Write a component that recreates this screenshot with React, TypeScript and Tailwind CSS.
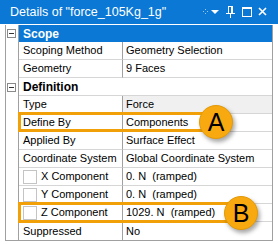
import React from "react";

type Row = {
  name: string;
  value: string;
  check?: boolean;
  grey?: boolean;
};

const scopeRows: Row[] = [
  { name: "Scoping Method", value: "Geometry Selection" },
  { name: "Geometry", value: "9 Faces" },
];

const definitionRows: Row[] = [
  { name: "Type", value: "Force", grey: true },
  { name: "Define By", value: "Components" },
  { name: "Applied By", value: "Surface Effect" },
  { name: "Coordinate System", value: "Global Coordinate System" },
  { name: "X Component", value: "0. N  (ramped)", check: true },
  { name: "Y Component", value: "0. N  (ramped)", check: true },
  { name: "Z Component", value: "1029. N  (ramped)", check: true },
  { name: "Suppressed", value: "No" },
];

function MinusBox() {
  return (
    <div className="ml-px flex h-[9px] w-[9px] items-center justify-center border border-[#8a8a8a] bg-white">
      <div className="h-px w-[5px] bg-[#333]" />
    </div>
  );
}

function PropRow({ row, last }: { row: Row; last?: boolean }) {
  return (
    <div className="flex h-[18px]">
      <div className="w-[13px] shrink-0 border-r border-[#a0a0a0]" />
      <div
        className={`flex w-[104px] shrink-0 items-center border-r border-[#a0a0a0] pl-[4px] ${
          last ? "" : "border-b border-b-[#d6d6d6]"
        }`}
      >
        {row.check ? (
          <div className="mr-[4px] h-[14px] w-[14px] shrink-0 border border-[#c4c4c4] bg-white" />
        ) : null}
        <span className="whitespace-nowrap">{row.name}</span>
      </div>
      <div
        className={`flex flex-1 items-center pl-[3px] ${
          last ? "" : "border-b border-[#d6d6d6]"
        } ${row.grey ? "bg-[#f0f0f0]" : ""}`}
      >
        <span className="whitespace-pre">{row.value}</span>
      </div>
    </div>
  );
}

function Badge({ letter }: { letter: string }) {
  return (
    <div className="flex h-[34px] w-[34px] items-center justify-center rounded-full border border-[#e39a08] bg-[#f8a90f] text-[25px] leading-none text-black shadow-[2px_3px_4px_rgba(0,0,0,0.35)]">
      {letter}
    </div>
  );
}

export default function App() {
  return (
    <div className="relative h-[244px] w-[278px] overflow-hidden bg-white font-['Liberation_Sans',Arial,sans-serif] text-[11px] text-black">
      <div className="flex h-[24px] items-center bg-[#0a78d4] pl-[10px] pr-[10px] text-white">
        <span className="flex-1 whitespace-nowrap text-[12.5px]">
          Details of "force_105Kg_1g"
        </span>
        <svg width="66" height="12" viewBox="0 0 66 12" className="shrink-0">
          <g fill="#9cc6ec">
            <rect x="1" y="5" width="1" height="1" />
            <rect x="3" y="3" width="1" height="1" />
            <rect x="3" y="7" width="1" height="1" />
            <rect x="5" y="5" width="1" height="1" />
          </g>
          <path d="M9 4 H17 L13 8 Z" fill="#fff" />
          <g fill="#fff">
            <rect x="26" y="0" width="5" height="1" />
            <rect x="26" y="0" width="1" height="7" />
            <rect x="29" y="0" width="2" height="7" />
            <rect x="24" y="7" width="9" height="1" />
            <rect x="28" y="8" width="1" height="4" />
          </g>
          <rect x="40.5" y="1.5" width="9" height="9" fill="none" stroke="#fff" strokeWidth="1" />
          <rect x="40.5" y="1.5" width="9" height="1.5" fill="#fff" />
          <path d="M57 2 L64 9 M64 2 L57 9" stroke="#fff" strokeWidth="1.6" />
        </svg>
      </div>

      <div className="ml-[5px] mt-px w-[268px] border-x border-b border-[#a0a0a0]">
        <div className="flex h-[17px]">
          <div className="flex w-[13px] shrink-0 items-center border-r border-[#a0a0a0]">
            <MinusBox />
          </div>
          <div className="flex flex-1 items-center bg-[#0a78d4] pl-[4px] text-[12px] font-bold text-white">
            Scope
          </div>
        </div>
        {scopeRows.map((r) => (
          <PropRow key={r.name} row={r} />
        ))}
        <div className="flex h-[18px]">
          <div className="flex w-[13px] shrink-0 items-center border-r border-[#a0a0a0]">
            <MinusBox />
          </div>
          <div className="flex flex-1 items-center border-b border-[#d6d6d6] pl-[4px] text-[12px] font-bold">
            Definition
          </div>
        </div>
        {definitionRows.map((r, i) => (
          <PropRow key={r.name} row={r} last={i === definitionRows.length - 1} />
        ))}
      </div>

      <div className="absolute left-[18px] top-[112px] h-[20px] w-[198px] border-[3px] border-[#f2a007]" />
      <div className="absolute left-[199px] top-[105px]">
        <Badge letter="A" />
      </div>
      <div className="absolute left-[18px] top-[202px] h-[21px] w-[222px] border-[3px] border-[#f2a007]" />
      <div className="absolute left-[224px] top-[196px]">
        <Badge letter="B" />
      </div>
    </div>
  );
}
